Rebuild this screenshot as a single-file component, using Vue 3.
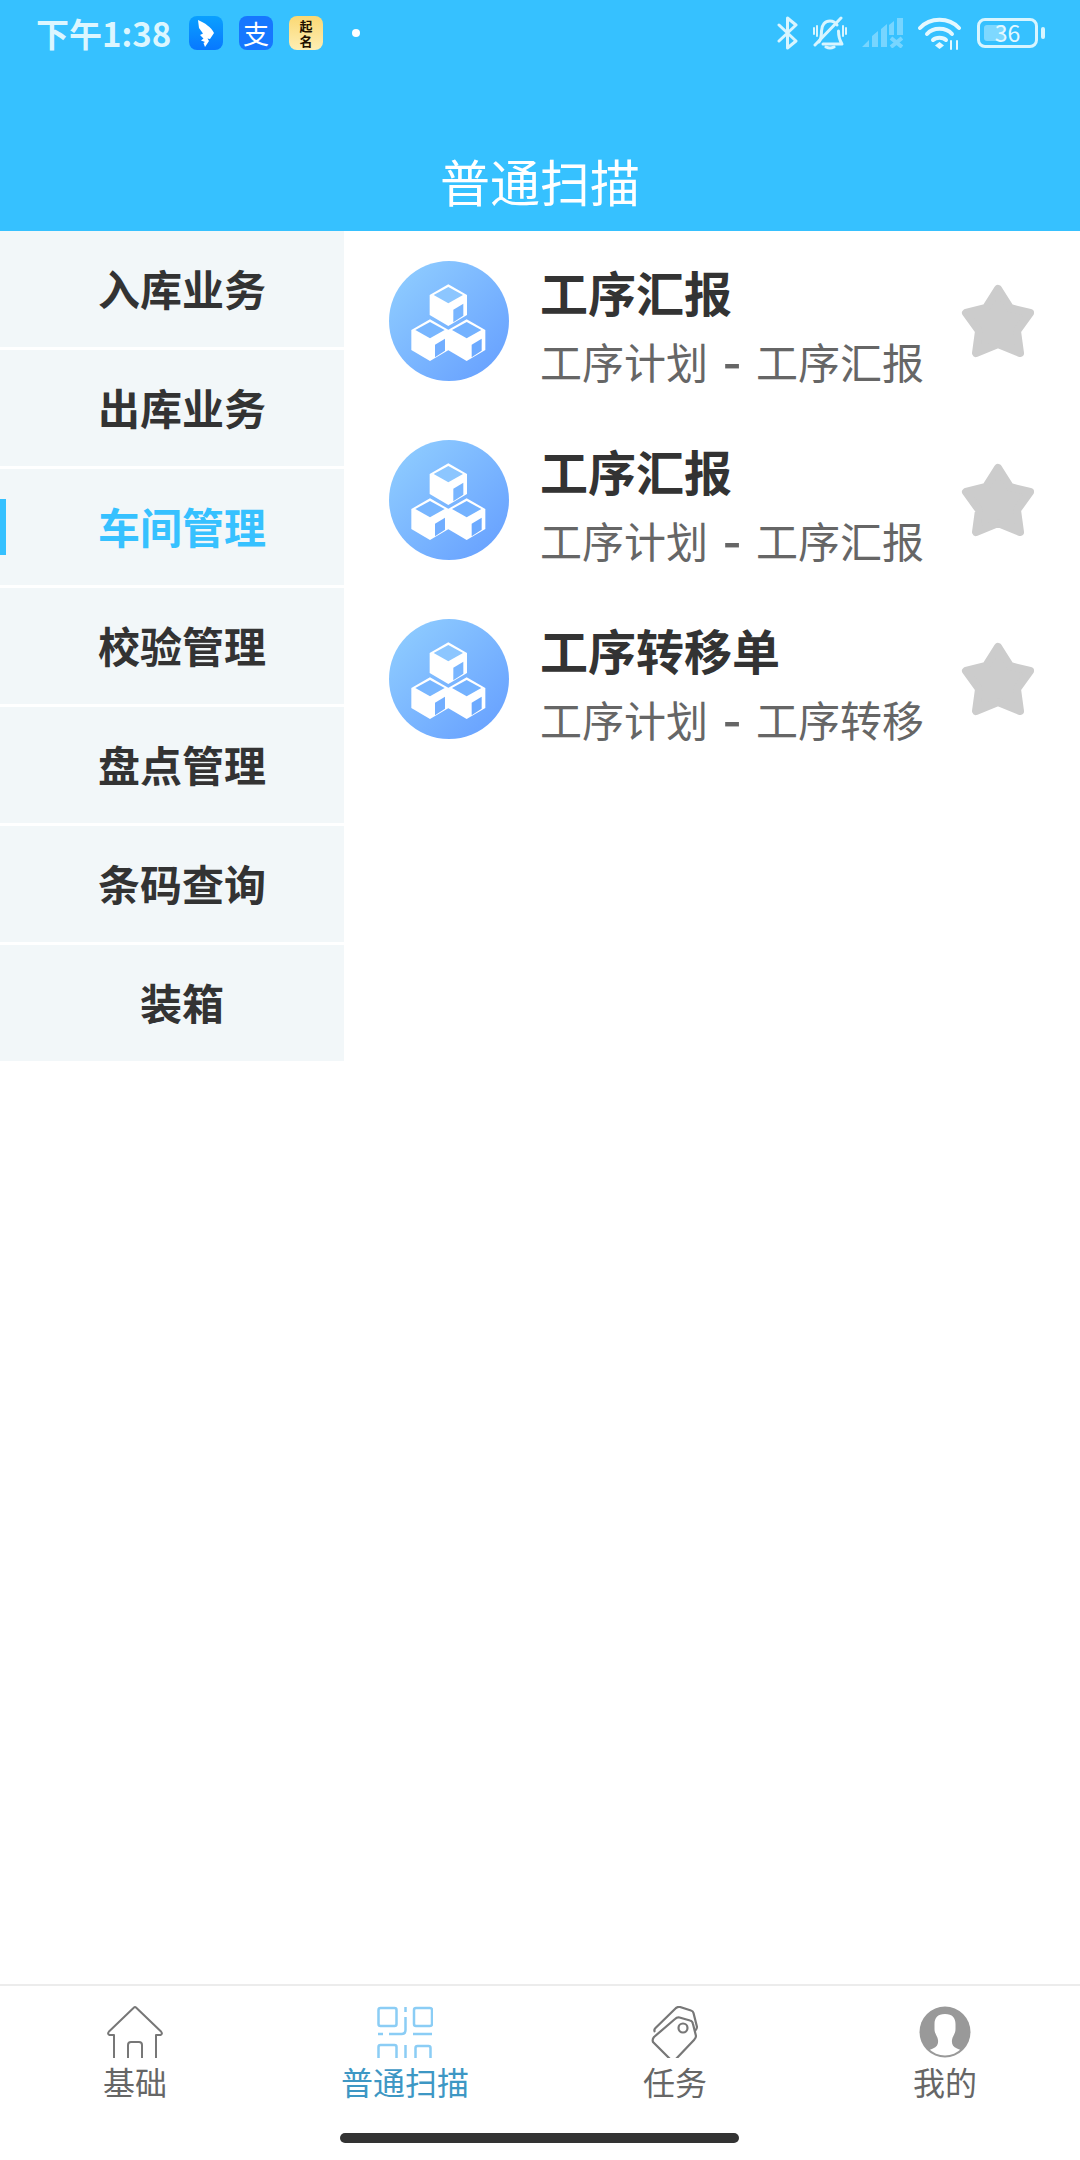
<script setup>
const menu = ['入库业务', '出库业务', '车间管理', '校验管理', '盘点管理', '条码查询', '装箱']
const activeMenu = 2
const rows = [
  { title: '工序汇报', from: '工序计划', to: '工序汇报' },
  { title: '工序汇报', from: '工序计划', to: '工序汇报' },
  { title: '工序转移单', from: '工序计划', to: '工序转移' },
]
const tabs = [
  { key: 'home', label: '基础' },
  { key: 'scan', label: '普通扫描', active: true },
  { key: 'tag', label: '任务' },
  { key: 'me', label: '我的' },
]
const cubes = [
  { x: 205, y: 100, top: '#8cc6ff', side: '#78b5ff' },
  { x: 150, y: 205, top: '#78b6ff', side: '#72aeff' },
  { x: 260, y: 205, top: '#74b2ff', side: '#6caaff' },
]
</script>

<template>
  <div class="page">
    <header class="header">
      <div class="status">
        <span class="time">下午1:38</span>
        <span class="app ding">
          <svg viewBox="0 0 34 34" width="34" height="34"><path d="M9 4C16 7 22 11 25 17L21 23L18.500 22.500L20 25L16 31L14.500 27L16 26L12 24.500L14.500 22.500L11 19L14 17.500L10 12Z" fill="#fff"/></svg>
        </span>
        <span class="app ali">支</span>
        <span class="app qm"><span class="qm-big">起<br>名</span></span>
        <span class="dot"></span>
        <div class="status-right">
          <svg class="si" width="21" height="34" viewBox="0 0 21 34" fill="none" stroke="#d8f5ff" stroke-width="3" stroke-linecap="round" stroke-linejoin="round"><path d="M2 9L19 25L10.500 32V2L19 9L2 25"/></svg>
          <svg class="si" width="34" height="34" viewBox="0 0 34 34" fill="none" stroke="#d8f5ff" stroke-width="3" stroke-linecap="round" stroke-linejoin="round"><path d="M6 26C8 23 8.500 19 8.500 15C8.500 9 12 5 17 5C20 5 22.500 6.500 24 9M25.500 15C25.500 20 26.500 24 29 28H10"/><path d="M28 2L2 29"/><path d="M13 31Q17 33 21 31"/><path d="M1 12V18M4 10V20M30 10V20M33 12V18" stroke-width="2"/></svg>
          <svg class="si" width="41" height="30" viewBox="0 0 41 30" fill="#d8f5ff"><g opacity=".4"><path d="M0 29L7 22V29ZM10 29V18L16 13V29ZM19 29V11L25 6V29ZM27 17V7L32 3V17ZM35 17V0L41 0V17Z"/><path d="M29 20L40 29M40 20L29 29" stroke="#d8f5ff" stroke-width="4" fill="none"/></g></svg>
          <svg class="si" width="44" height="33" viewBox="0 0 44 33" fill="none" stroke="#e4f8ff" stroke-linecap="round"><path d="M2 11C12 0 31 0 41 11" stroke-width="4"/><path d="M9 17C15 10 28 10 34 17" stroke-width="4"/><path d="M15 23C18 20 25 20 28 23" stroke-width="4"/><path d="M21.500 25L17 28.500L21.500 32L26 28.500Z" fill="#e4f8ff" stroke="none"/><path d="M33 24V32M39 24V32" stroke-width="2"/></svg>
          <div class="battery">
            <span class="battery-fill"></span>
            <span class="battery-text">36</span>
            <span class="battery-tip"></span>
          </div>
        </div>
      </div>
      <h1 class="title">普通扫描</h1>
    </header>

    <main class="main">
      <nav class="side">
        <div v-for="(m, i) in menu" :key="m" class="side-item" :class="{ on: i === activeMenu }">
          <span v-if="i === activeMenu" class="indicator"></span>
          {{ m }}
        </div>
      </nav>
      <section class="list">
        <div v-for="(r, i) in rows" :key="i" class="row">
          <div class="avatar">
            <svg width="120" height="120" viewBox="27 30 360 360">
              <g v-for="c in cubes" :key="c.x + '-' + c.y">
                <path :d="`M${c.x} ${c.y}l56 32v60l-56 33l-56 -33v-60z`" fill="#fff"/>
                <path :d="`M${c.x} ${c.y + 8}l44 24l-44 25l-44 -25z`" :fill="c.top"/>
                <path :d="`M${c.x + 45} ${c.y + 58}v36l-30 20v-38z`" :fill="c.side"/>
              </g>
            </svg>
          </div>
          <div class="text">
            <div class="row-title">{{ r.title }}</div>
            <div class="row-sub">{{ r.from }}<span class="dash">-</span>{{ r.to }}</div>
          </div>
          <svg class="star" width="74" height="74" viewBox="0 0 74 74"><path d="M37 5L49 24L69 29L56 47L59 69L37 60L15 69L18 47L5 29L25 24Z" fill="#ccc" stroke="#ccc" stroke-width="8" stroke-linejoin="round"/></svg>
        </div>
      </section>
    </main>

    <footer class="tabs">
      <div v-for="t in tabs" :key="t.key" class="tab" :class="{ active: t.active }">
        <div class="tab-icon">
          <svg v-if="t.key === 'home'" width="56" height="52" viewBox="0 0 56 52" fill="none" stroke="#777" stroke-width="2" stroke-linejoin="round"><path d="M7 60V29H2.500Q0 28 2 25.500L27 1.500Q28 .5 29 1.500L54 25.500Q56 28 53.500 29H49V60"/><path d="M21 60V39Q21 36 24 36H32Q35 36 35 39V60"/></svg>
          <svg v-else-if="t.key === 'scan'" width="56" height="52" viewBox="0 0 56 52" fill="none" stroke="#8bcdf5" stroke-width="2.500"><rect x="1.500" y="2" width="18" height="18" rx="2"/><rect x="37" y="2" width="18" height="18" rx="2"/><path d="M28.500 1V6M28.500 11V24Q28.500 28 24.500 28H12M1 28H6M36 28H55"/><path d="M1.500 60V41Q1.500 39 3.500 39H17.500Q19.500 39 19.500 41V60"/><path d="M28.500 39V60"/><rect x="38.500" y="40" width="15" height="22" rx="2"/></svg>
          <svg v-else-if="t.key === 'tag'" width="56" height="52" viewBox="0 0 56 52" fill="none" stroke="#777" stroke-width="2.200" stroke-linejoin="round"><g transform="translate(5 0)"><path d="M3 26Q1.500 24 3.500 22L24 2Q26 .5 28 1L39 4.500Q41 5 41.500 7L45 21Q45 23 43 25"/><path d="M1 36Q0 33.500 2 31L23 13Q25 11 27.500 11.500L38 14.500Q40.500 15 41 18L44 30Q44 32 42 34L23 54H19Z"/><circle cx="31" cy="22" r="4.500"/></g></svg>
          <svg v-else width="52" height="52" viewBox="0 0 52 52"><defs><clipPath id="meclip"><circle cx="26" cy="26" r="23.500"/></clipPath></defs><circle cx="26" cy="26" r="25.500" fill="#999"/><path clip-path="url(#meclip)" d="M26 8C18.500 8 15.500 12 15.500 18V23C15.500 28 18.500 30 19 34C19.500 38 18 41 14 42.500L8 45V52H44V45L38 42.500C34 41 32.500 38 33 34C33.500 30 36.500 28 36.500 23V18C36.500 12 33.500 8 26 8Z" fill="#fff"/></svg>
        </div>
        <div class="tab-label">{{ t.label }}</div>
      </div>
      <span class="home-bar"></span>
    </footer>
  </div>
</template>

<style scoped>
.page {
  position: relative;
  width: 1080px;
  height: 2160px;
  display: flex;
  flex-direction: column;
  background: #fff;
  overflow: hidden;
  font-family: "Noto Sans CJK SC", "Noto Sans", sans-serif;
}
.header {
  height: 231px;
  flex: none;
  background: #36c1ff;
  display: flex;
  flex-direction: column;
}
.status {
  height: 34px;
  margin-top: 16px;
  padding: 0 35px 0 36px;
  display: flex;
  align-items: center;
}
.time {
  width: 153px;
  flex: none;
  font-size: 33px;
  line-height: 34px;
  font-weight: 700;
  color: #dcf6ff;
  white-space: nowrap;
}
.app {
  width: 34px;
  height: 34px;
  flex: none;
  margin-right: 16px;
  border-radius: 8px;
  display: flex;
  align-items: center;
  justify-content: center;
}
.ding { background: linear-gradient(#0aa0ff, #0878ff); }
.ali {
  background: #1677ff;
  color: #fff;
  font-size: 26px;
  line-height: 34px;
}
.qm {
  background: linear-gradient(#fbd873, #fdeeb4);
  color: #201000;
}
.qm-big { font-size: 13px; line-height: 15px; font-weight: 700; }
.dot {
  width: 8px;
  height: 8px;
  margin-left: 13px;
  border-radius: 50%;
  background: #fff;
}
.status-right {
  margin-left: auto;
  display: flex;
  align-items: center;
  gap: 15px;
}
.si { flex: none; display: block; }
.battery {
  position: relative;
  width: 61px;
  height: 30px;
  margin-right: 7px;
  box-sizing: border-box;
  border: 3px solid #d8f5ff;
  border-radius: 8px;
}
.battery-fill {
  position: absolute;
  left: 4px;
  top: 4px;
  bottom: 4px;
  width: 20px;
  border-radius: 3px;
  background: rgba(216, 245, 255, .45);
}
.battery-text {
  position: absolute;
  inset: 0;
  text-align: center;
  font-size: 23px;
  line-height: 23px;
  color: #e4f8ff;
}
.battery-tip {
  position: absolute;
  right: -10px;
  top: 6px;
  width: 4px;
  height: 12px;
  border-radius: 2px;
  background: #d8f5ff;
}
.title {
  margin: auto 0 0;
  padding-bottom: 19px;
  text-align: center;
  font-size: 50px;
  line-height: 64px;
  font-weight: 400;
  color: #fff;
}
.main {
  flex: 1;
  display: flex;
  align-items: flex-start;
  min-height: 0;
}
.side {
  width: 344px;
  flex: none;
  display: flex;
  flex-direction: column;
  gap: 3px;
}
.side-item {
  position: relative;
  height: 116px;
  box-sizing: border-box;
  padding: 0 0 4px 20px;
  display: flex;
  align-items: center;
  justify-content: center;
  background: #f2f7f9;
  font-size: 42px;
  font-weight: 700;
  color: #333;
}
.side-item.on { color: #36c1ff; }
.indicator {
  position: absolute;
  left: 0;
  top: 30px;
  width: 6px;
  height: 56px;
  background: #36c1ff;
}
.list {
  flex: 1;
  padding: 30px 45px 0;
  display: flex;
  flex-direction: column;
  gap: 59px;
}
.row {
  height: 120px;
  display: flex;
  align-items: center;
}
.avatar {
  width: 120px;
  height: 120px;
  flex: none;
  border-radius: 50%;
  background: linear-gradient(135deg, #92d0ff, #649dff);
  overflow: hidden;
}
.avatar svg { display: block; }
.text {
  align-self: flex-start;
  margin-left: 31px;
  min-width: 0;
}
.row-title {
  font-size: 48px;
  line-height: 60px;
  font-weight: 700;
  color: #333;
}
.row-sub {
  margin-top: 11px;
  display: flex;
  font-size: 42px;
  line-height: 58px;
  color: #666;
  white-space: nowrap;
}
.dash {
  width: 48px;
  text-align: center;
  font-weight: 500;
  font-size: 52px;
  line-height: 54px;
}
.star {
  margin-left: auto;
  flex: none;
}
.tabs {
  position: relative;
  height: 176px;
  flex: none;
  box-sizing: border-box;
  border-top: 2px solid #ececec;
  display: grid;
  grid-template-columns: repeat(4, 1fr);
}
.tab {
  padding-top: 20px;
  display: flex;
  flex-direction: column;
  align-items: center;
}
.tab-icon {
  width: 56px;
  height: 52px;
  overflow: hidden;
  display: flex;
  justify-content: center;
}
.tab-label {
  margin-top: 1px;
  font-size: 32px;
  line-height: 44px;
  color: #666;
}
.tab.active .tab-label { color: #3d97c4; }
.home-bar {
  position: absolute;
  left: 340px;
  top: 147px;
  width: 399px;
  height: 10px;
  border-radius: 5px;
  background: #333;
}
</style>
